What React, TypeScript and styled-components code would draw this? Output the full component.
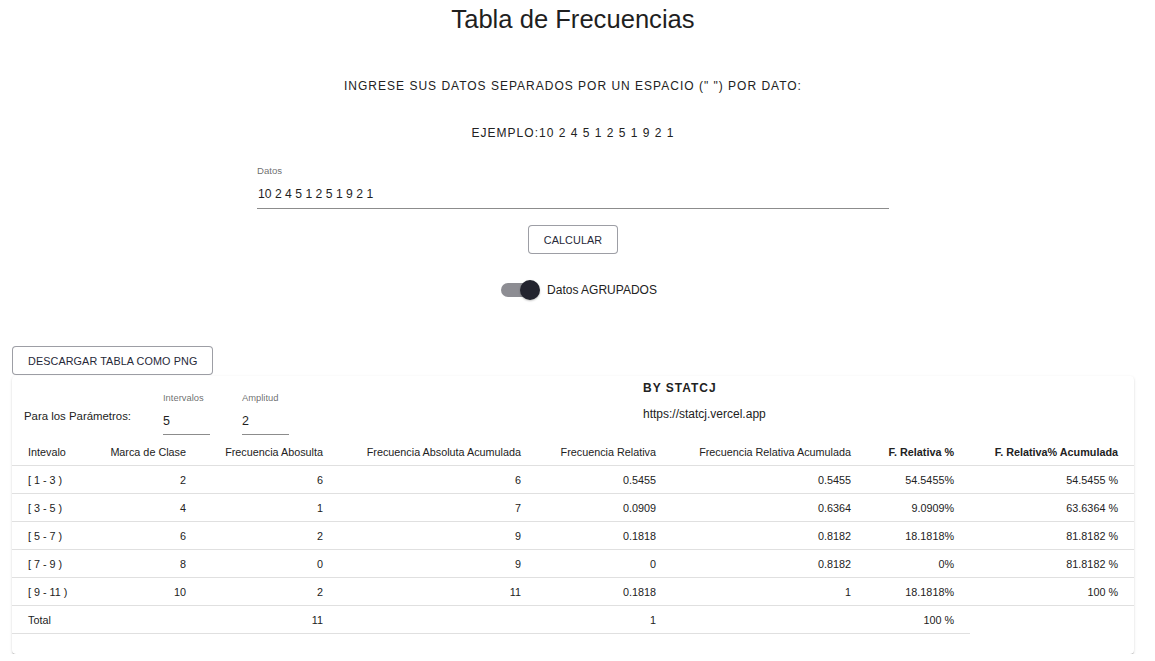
import React from "react";
import styled, { createGlobalStyle } from "styled-components";

const GlobalStyle = createGlobalStyle`
  html, body {
    margin: 0;
    padding: 0;
    background: #ffffff;
    font-family: "Liberation Sans", Arial, Helvetica, sans-serif;
    color: rgba(0, 0, 0, 0.87);
  }
  * { box-sizing: border-box; }
`;

const Page = styled.div`
  width: 1146px;
  display: flex;
  flex-direction: column;
`;

const Title = styled.h1`
  margin: 0;
  font-size: 25.6px;
  font-weight: 400;
  line-height: 38px;
  text-align: center;
  color: #1f1f1f;
`;

const Overline = styled.p<{ $mt: number }>`
  margin: ${(p) => p.$mt}px 0 0;
  font-size: 12px;
  line-height: 32px;
  letter-spacing: 1px;
  text-transform: uppercase;
  text-align: center;
  color: #222;
`;

const DataField = styled.label`
  width: 632px;
  margin: 15px auto 0;
  display: flex;
  flex-direction: column;
`;

const FieldLabel = styled.span`
  font-size: 9.6px;
  line-height: 14px;
  color: rgba(0, 0, 0, 0.6);
`;

const DataInput = styled.input`
  border: none;
  border-bottom: 1px solid rgba(0, 0, 0, 0.45);
  outline: none;
  background: transparent;
  padding: 6px 0 4px 1px;
  height: 31px;
  font-family: inherit;
  font-size: 12.2px;
  line-height: 20px;
  color: #1f1f1f;
`;

const CenterRow = styled.div<{ $mt: number }>`
  display: flex;
  justify-content: center;
  align-items: center;
  margin-top: ${(p) => p.$mt}px;
`;

const StartRow = styled.div<{ $mt: number }>`
  display: flex;
  padding-left: 12px;
  margin-top: ${(p) => p.$mt}px;
`;

const OutlineButton = styled.button`
  height: 29px;
  padding: 0 15px;
  border: 1px solid rgba(38, 40, 56, 0.45);
  border-radius: 4px;
  background: #fff;
  font-family: inherit;
  font-size: 10.8px;
  letter-spacing: 0.1px;
  color: #262838;
  text-transform: uppercase;
  cursor: pointer;
`;

const SwitchLabel = styled.label`
  display: flex;
  align-items: center;
  gap: 7px;
  height: 20px;
  padding-left: 12px;
  font-size: 12px;
  color: #222;
`;

const SwitchBox = styled.span`
  position: relative;
  width: 39px;
  height: 20px;
  display: inline-block;
`;

const SwitchTrack = styled.span`
  position: absolute;
  left: 0;
  top: 3px;
  width: 33px;
  height: 14px;
  border-radius: 7px;
  background: #8d8d93;
`;

const SwitchThumb = styled.span`
  position: absolute;
  left: 19px;
  top: 0;
  width: 20px;
  height: 20px;
  border-radius: 50%;
  background: #23242f;
  box-shadow: 0 1px 2px rgba(0, 0, 0, 0.25);
`;

const Paper = styled.section`
  margin: 1px 12px 0;
  border-radius: 4px;
  background: #fff;
  box-shadow: 0px 2px 1px -1px rgba(0, 0, 0, 0.2), 0px 1px 1px 0px rgba(0, 0, 0, 0.14),
    0px 1px 3px 0px rgba(0, 0, 0, 0.12);
  padding-bottom: 20px;
`;

const PaperHead = styled.div`
  display: grid;
  grid-template-columns: 631px 1fr;
  height: 62px;
`;

const ParamGroup = styled.div`
  display: flex;
  align-items: flex-start;
  padding: 16px 0 0 12px;
`;

const ParamText = styled.span`
  width: 139px;
  margin-top: 16px;
  font-size: 11.4px;
  line-height: 16px;
  color: #222;
`;

const SmallField = styled.label`
  display: flex;
  flex-direction: column;
  width: 47px;
  margin-right: 32px;
`;

const SmallLabel = styled.span`
  font-size: 9.4px;
  line-height: 12px;
  color: rgba(0, 0, 0, 0.6);
`;

const SmallInput = styled.input`
  border: none;
  border-bottom: 1px solid rgba(0, 0, 0, 0.45);
  outline: none;
  background: transparent;
  width: 100%;
  height: 31px;
  padding: 9px 0 5px;
  font-family: inherit;
  font-size: 12.5px;
  line-height: 16px;
  color: #1f1f1f;
`;

const Brand = styled.div`
  display: flex;
  flex-direction: column;
  padding-top: 4px;
`;

const BrandName = styled.span`
  font-size: 12px;
  line-height: 16px;
  font-weight: 700;
  letter-spacing: 1px;
  color: #222;
`;

const BrandUrl = styled.span`
  margin-top: 10px;
  font-size: 12px;
  line-height: 16px;
  color: #222;
`;

const Table = styled.table`
  width: 100%;
  table-layout: fixed;
  border-collapse: separate;
  border-spacing: 0;
`;

const Cell = styled.td<{ $left?: boolean; $bold?: boolean }>`
  height: 28px;
  padding: 0 16px;
  border-bottom: 1px solid #e0e0e0;
  font-size: 10.8px;
  line-height: 14px;
  font-weight: ${(p) => (p.$bold ? 700 : 400)};
  text-align: ${(p) => (p.$left ? "left" : "right")};
  white-space: nowrap;
  color: #222;
  vertical-align: middle;
`;

const HeadCell = styled(Cell).attrs({ as: "th" })``;

const widths = [82, 108, 137, 198, 135, 195, 103, 164];

const headers: { label: string; bold?: boolean }[] = [
  { label: "Intevalo" },
  { label: "Marca de Clase" },
  { label: "Frecuencia Abosulta" },
  { label: "Frecuencia Absoluta Acumulada" },
  { label: "Frecuencia Relativa" },
  { label: "Frecuencia Relativa Acumulada" },
  { label: "F. Relativa %", bold: true },
  { label: "F. Relativa% Acumulada", bold: true },
];

const rows: string[][] = [
  ["[ 1 - 3 )", "2", "6", "6", "0.5455", "0.5455", "54.5455%", "54.5455 %"],
  ["[ 3 - 5 )", "4", "1", "7", "0.0909", "0.6364", "9.0909%", "63.6364 %"],
  ["[ 5 - 7 )", "6", "2", "9", "0.1818", "0.8182", "18.1818%", "81.8182 %"],
  ["[ 7 - 9 )", "8", "0", "9", "0", "0.8182", "0%", "81.8182 %"],
  ["[ 9 - 11 )", "10", "2", "11", "0.1818", "1", "18.1818%", "100 %"],
];

const totals = ["Total", "", "11", "", "1", "", "100 %"];

export default function App() {
  return (
    <>
      <GlobalStyle />
      <Page>
        <Title>Tabla de Frecuencias</Title>
        <Overline $mt={32}>INGRESE SUS DATOS SEPARADOS POR UN ESPACIO (" ") POR DATO:</Overline>
        <Overline $mt={15}>EJEMPLO:10 2 4 5 1 2 5 1 9 2 1</Overline>
        <DataField>
          <FieldLabel>Datos</FieldLabel>
          <DataInput defaultValue="10 2 4 5 1 2 5 1 9 2 1" />
        </DataField>
        <CenterRow $mt={16}>
          <OutlineButton>Calcular</OutlineButton>
        </CenterRow>
        <CenterRow $mt={26}>
          <SwitchLabel>
            <SwitchBox>
              <SwitchTrack />
              <SwitchThumb />
            </SwitchBox>
            Datos AGRUPADOS
          </SwitchLabel>
        </CenterRow>
        <StartRow $mt={46}>
          <OutlineButton>Descargar tabla como PNG</OutlineButton>
        </StartRow>
        <Paper>
          <PaperHead>
            <ParamGroup>
              <ParamText>Para los Parámetros:</ParamText>
              <SmallField>
                <SmallLabel>Intervalos</SmallLabel>
                <SmallInput defaultValue="5" />
              </SmallField>
              <SmallField>
                <SmallLabel>Amplitud</SmallLabel>
                <SmallInput defaultValue="2" />
              </SmallField>
            </ParamGroup>
            <Brand>
              <BrandName>BY STATCJ</BrandName>
              <BrandUrl>https://statcj.vercel.app</BrandUrl>
            </Brand>
          </PaperHead>
          <Table>
            <colgroup>
              {widths.map((w, i) => (
                <col key={i} style={{ width: w }} />
              ))}
            </colgroup>
            <thead>
              <tr>
                {headers.map((h, i) => (
                  <HeadCell key={i} $left={i === 0} $bold={h.bold}>
                    {h.label}
                  </HeadCell>
                ))}
              </tr>
            </thead>
            <tbody>
              {rows.map((r, ri) => (
                <tr key={ri}>
                  {r.map((c, ci) => (
                    <Cell key={ci} $left={ci === 0}>
                      {c}
                    </Cell>
                  ))}
                </tr>
              ))}
              <tr>
                {totals.map((c, ci) => (
                  <Cell key={ci} $left={ci === 0}>
                    {c}
                  </Cell>
                ))}
              </tr>
            </tbody>
          </Table>
        </Paper>
      </Page>
    </>
  );
}
